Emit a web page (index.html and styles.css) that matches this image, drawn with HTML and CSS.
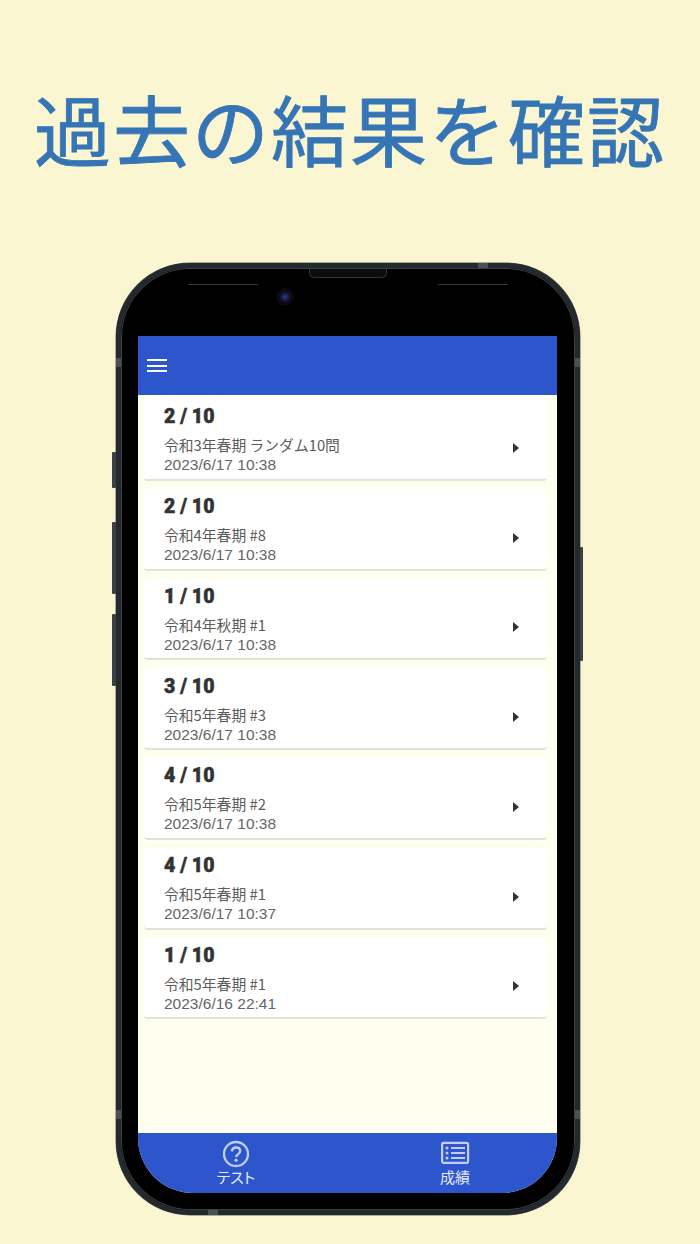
FILE: index.html
```html
<!DOCTYPE html>
<html lang="ja">
<head>
  <meta charset="UTF-8">
  <title>過去の結果を確認</title>
  <link rel="stylesheet" href="styles.css">
</head>
<body>
  <h1 class="headline">過去の結果を確認</h1>

  <div class="phone">
    <span class="side-btn btn-mute"></span>
    <span class="side-btn btn-up"></span>
    <span class="side-btn btn-down"></span>
    <span class="side-btn btn-power"></span>
    <span class="band band-top"></span>
    <span class="band band-bottom"></span>
    <span class="band band-left-a"></span>
    <span class="band band-left-b"></span>
    <span class="band band-right-a"></span>
    <span class="band band-right-b"></span>
    <span class="speaker"></span>
    <span class="glint glint-left"></span>
    <span class="glint glint-right"></span>
    <span class="camera"></span>

    <div class="screen">
      <header class="appbar">
        <div class="menu-icon"><span></span><span></span><span></span></div>
      </header>

      <main class="results">
        <div class="card">
          <div class="card-text">
            <div class="score">2 / 10</div>
            <div class="name">令和3年春期 ランダム10問</div>
            <div class="date">2023/6/17 10:38</div>
          </div>
          <span class="arrow"></span>
        </div>
        <div class="card">
          <div class="card-text">
            <div class="score">2 / 10</div>
            <div class="name">令和4年春期 #8</div>
            <div class="date">2023/6/17 10:38</div>
          </div>
          <span class="arrow"></span>
        </div>
        <div class="card">
          <div class="card-text">
            <div class="score">1 / 10</div>
            <div class="name">令和4年秋期 #1</div>
            <div class="date">2023/6/17 10:38</div>
          </div>
          <span class="arrow"></span>
        </div>
        <div class="card">
          <div class="card-text">
            <div class="score">3 / 10</div>
            <div class="name">令和5年春期 #3</div>
            <div class="date">2023/6/17 10:38</div>
          </div>
          <span class="arrow"></span>
        </div>
        <div class="card">
          <div class="card-text">
            <div class="score">4 / 10</div>
            <div class="name">令和5年春期 #2</div>
            <div class="date">2023/6/17 10:38</div>
          </div>
          <span class="arrow"></span>
        </div>
        <div class="card">
          <div class="card-text">
            <div class="score">4 / 10</div>
            <div class="name">令和5年春期 #1</div>
            <div class="date">2023/6/17 10:37</div>
          </div>
          <span class="arrow"></span>
        </div>
        <div class="card">
          <div class="card-text">
            <div class="score">1 / 10</div>
            <div class="name">令和5年春期 #1</div>
            <div class="date">2023/6/16 22:41</div>
          </div>
          <span class="arrow"></span>
        </div>
      </main>

      <nav class="tabbar">
        <div class="tab">
          <svg class="tab-icon" width="28" height="28" viewBox="0 0 28 28" fill="none">
            <circle cx="14" cy="14" r="12" stroke="currentColor" stroke-width="2.3"/>
            <path d="M9.9 11.3c.2-2.4 1.9-3.8 4.2-3.8 2.4 0 4.1 1.4 4.1 3.5 0 1.6-.9 2.5-2.1 3.2-1.2.8-1.9 1.3-1.9 2.8" stroke="currentColor" stroke-width="2.4"/>
            <circle cx="14.1" cy="20.2" r="1.6" fill="currentColor"/>
          </svg>
          <span>テスト</span>
        </div>
        <div class="tab">
          <svg class="tab-icon" width="30" height="28" viewBox="0 0 30 28" fill="none">
            <rect x="2.1" y="2.9" width="26" height="19.9" rx="1.5" stroke="currentColor" stroke-width="2.2"/>
            <circle cx="7" cy="8" r="1.5" fill="currentColor"/>
            <circle cx="7" cy="13" r="1.5" fill="currentColor"/>
            <circle cx="7" cy="18" r="1.5" fill="currentColor"/>
            <path d="M11 8h14M11 13h14M11 18h14" stroke="currentColor" stroke-width="2.2"/>
          </svg>
          <span>成績</span>
        </div>
      </nav>
    </div>
  </div>
</body>
</html>
```

FILE: styles.css
```css
html, body { margin: 0; padding: 0; }
body {
  width: 700px;
  height: 1244px;
  overflow: hidden;
  background-color: #f9f6d1;
  font-family: "Noto Sans CJK JP", "Noto Sans", sans-serif;
  display: flex;
  flex-direction: column;
  align-items: center;
}

.headline {
  margin: 0;
  padding-top: 78px;
  height: 183px;
  box-sizing: border-box;
  font-size: 77px;
  line-height: 100px;
  letter-spacing: 2px;
  font-weight: 400;
  color: #3575b5;
  -webkit-text-stroke: 0.8px #3575b5;
  white-space: nowrap;
}

.phone {
  position: relative;
  box-sizing: border-box;
  width: 464px;
  height: 952px;
  margin-top: 80px;
  margin-left: -4px;
  padding: 68px 18px 17px 17px;
  background: #000;
  border: 5px solid #24292d;
  border-radius: 74px;
  box-shadow: 0 0 0 0.5px #5a5f63, inset 0 0 0 1px #3a3f44;
}

.side-btn { position: absolute; width: 4px; background: #3a4046; border-radius: 1px; }
.btn-mute { left: -9px; top: 184px; height: 36px; }
.btn-up { left: -9px; top: 254px; height: 72px; }
.btn-down { left: -9px; top: 346px; height: 72px; }
.btn-power { right: -8px; top: 279px; height: 114px; width: 3px; }

.band { position: absolute; background: #4b5055; }
.band-top { top: -5px; left: 357px; width: 10px; height: 5px; }
.band-bottom { bottom: -5px; left: 87px; width: 10px; height: 5px; }
.band-left-a { left: -5px; top: 90px; width: 5px; height: 9px; }
.band-left-b { left: -5px; top: 842px; width: 5px; height: 9px; }
.band-right-a { right: -5px; top: 90px; width: 5px; height: 9px; }
.band-right-b { right: -5px; top: 842px; width: 5px; height: 9px; }

.speaker {
  position: absolute;
  left: 188px;
  top: 1px;
  width: 78px;
  height: 9px;
  box-sizing: border-box;
  background: #0c0d0e;
  border: 1px solid #30343a;
  border-top: none;
  border-radius: 0 0 5px 5px;
}

.glint { position: absolute; top: 16px; height: 1px; width: 70px; background: #3a382c; }
.glint-left { left: 67px; }
.glint-right { left: 317px; }

.camera {
  position: absolute;
  left: 155px;
  top: 20px;
  width: 18px;
  height: 18px;
  border-radius: 50%;
  background: radial-gradient(circle, #2a3a8c 0, #1a2050 22%, #0b0b14 45%, #050507 100%);
}

.screen {
  width: 419px;
  height: 857px;
  display: flex;
  flex-direction: column;
  background-color: #feffee;
  border-radius: 0 0 55px 55px;
  overflow: hidden;
}

.appbar {
  height: 59px;
  flex-shrink: 0;
  background-color: #2d56cc;
  display: flex;
  align-items: center;
  padding-left: 9px;
}
.menu-icon { display: flex; flex-direction: column; gap: 3.5px; width: 20px; }
.menu-icon span { display: block; height: 2px; background: #fff; }

.results {
  flex: 1;
  display: flex;
  flex-direction: column;
  gap: 8px;
  padding: 4px 10px 0 6px;
}

.card {
  height: 81.75px;
  flex-shrink: 0;
  box-sizing: border-box;
  background: #fff;
  border-radius: 4px;
  border-bottom: 2px solid #e2e2d6;
  display: flex;
  align-items: center;
  justify-content: space-between;
  padding: 0 28px 0 20px;
}

.card-text { padding-top: 2px; }
.score {
  font-family: "Roboto", sans-serif;
  font-size: 19.5px;
  line-height: 26px;
  font-weight: 900;
  color: #333;
  -webkit-text-stroke: 0.5px #333;
}
.name { font-size: 14.8px; line-height: 20px; margin-top: 5px; color: #5c5c5c; }
.date { font-family: "Liberation Sans", sans-serif; font-size: 15.5px; line-height: 20px; color: #666; }

.arrow {
  width: 0;
  height: 0;
  margin-top: 18px;
  border-left: 6px solid #333;
  border-top: 5px solid transparent;
  border-bottom: 5px solid transparent;
}

.tabbar {
  height: 60px;
  flex-shrink: 0;
  background-color: #2d56cc;
  display: flex;
  justify-content: space-between;
  padding: 0 72px 0 68px;
}
.tab {
  width: 60px;
  display: flex;
  flex-direction: column;
  align-items: center;
  padding-top: 7px;
  color: #e6ebfa;
  font-size: 15px;
  line-height: 18px;
  font-feature-settings: "palt";
}
.tab-icon { color: #c3cff2; display: block; height: 28px; }
```
